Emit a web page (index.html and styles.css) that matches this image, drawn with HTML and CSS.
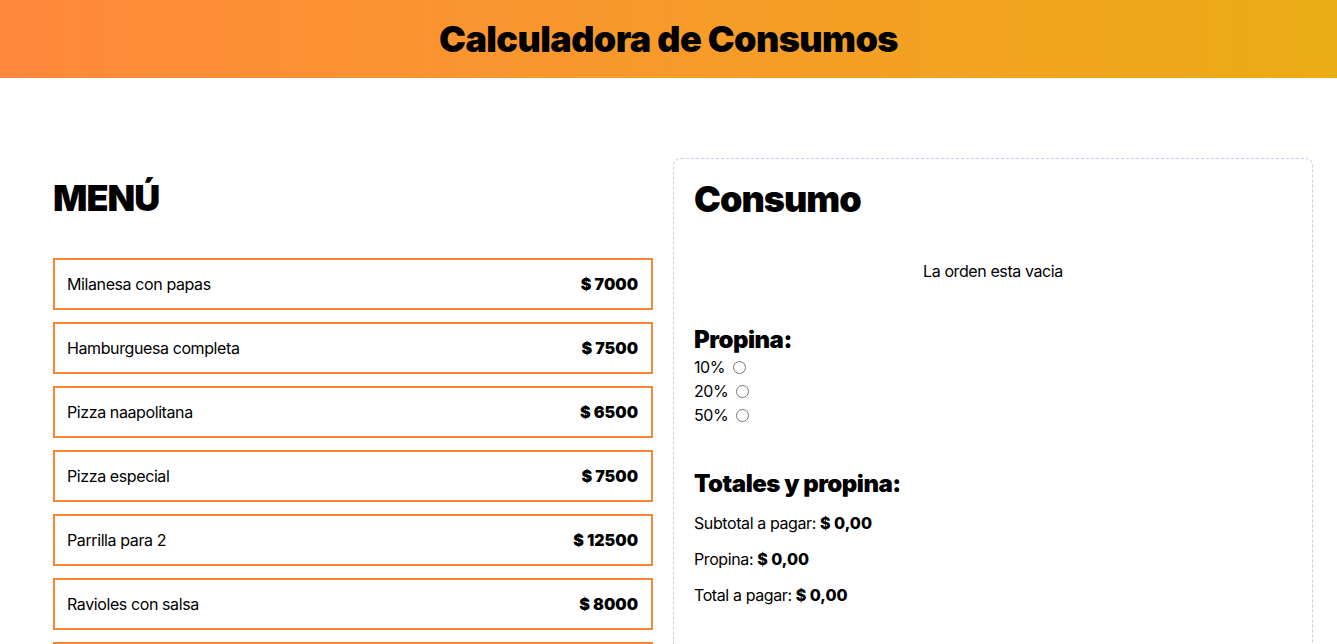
FILE: index.html
```html
<!DOCTYPE html>
<html lang="es">
<head>
<meta charset="utf-8">
<title>Calculadora de Consumos</title>
<link rel="stylesheet" href="styles.css">
</head>
<body>
<header class="header">
  <h1 class="header-title">Calculadora de Consumos</h1>
</header>
<main class="main">
  <section class="menu">
    <h2 class="section-title">MENÚ</h2>
    <div class="menu-list">
      <button class="menu-item"><span>Milanesa con papas</span><span class="price">$ 7000</span></button>
      <button class="menu-item"><span>Hamburguesa completa</span><span class="price">$ 7500</span></button>
      <button class="menu-item"><span>Pizza naapolitana</span><span class="price">$ 6500</span></button>
      <button class="menu-item"><span>Pizza especial</span><span class="price">$ 7500</span></button>
      <button class="menu-item"><span>Parrilla para 2</span><span class="price">$ 12500</span></button>
      <button class="menu-item"><span>Ravioles con salsa</span><span class="price">$ 8000</span></button>
      <button class="menu-item"><span>Tarta de verduras</span><span class="price">$ 5500</span></button>
    </div>
  </section>
  <section class="order">
    <h2 class="section-title">Consumo</h2>
    <p class="empty">La orden esta vacia</p>
    <h3 class="sub-title tip-title">Propina:</h3>
    <form class="tips">
      <label class="tip"><span>10%</span><input type="radio" name="tip"></label>
      <label class="tip"><span>20%</span><input type="radio" name="tip"></label>
      <label class="tip"><span>50%</span><input type="radio" name="tip"></label>
    </form>
    <h3 class="sub-title totals-title">Totales y propina:</h3>
    <p class="total">Subtotal a pagar: <b>$ 0,00</b></p>
    <p class="total">Propina: <b>$ 0,00</b></p>
    <p class="total">Total a pagar: <b>$ 0,00</b></p>
  </section>
</main>
</body>
</html>
```

FILE: styles.css
```css
* { box-sizing: border-box; }
html, body { margin: 0; padding: 0; }
body {
  font-family: Inter, "Noto Sans", sans-serif;
  color: #000;
  background: #fff;
  font-size: 16px;
  letter-spacing: -0.4px;
}
.header {
  height: 78px;
  background: linear-gradient(to right, #ff883c, #f89a2a 50%, #eaac14);
  display: flex;
  align-items: center;
  justify-content: center;
}
.header-title {
  margin: 0;
  font-size: 36px;
  font-weight: 900;
  letter-spacing: -0.6px;
}
.main {
  display: grid;
  grid-template-columns: 640px 640px;
  gap: 0;
  padding: 80px 0 0 33px;
}
.menu { padding: 18px 20px 20px; }
.section-title {
  margin: 0;
  font-size: 36px;
  font-weight: 900;
  line-height: 44px;
  letter-spacing: -1px;
}
.menu .section-title { margin-bottom: 38px; }
.menu-list {
  display: flex;
  flex-direction: column;
  gap: 12px;
}
.menu-item {
  display: flex;
  justify-content: space-between;
  align-items: center;
  width: 100%;
  border: 2px solid #fb8535;
  background: #fff;
  padding: 12px 13px 12px 12px;
  font-family: inherit;
  font-size: 16px;
  line-height: 24px;
  letter-spacing: -0.4px;
  color: #000;
  text-align: left;
}
.price { font-weight: 900; letter-spacing: 0; }
.order {
  border: 1px dashed #c3cfe2;
  border-radius: 8px;
  padding: 18px 20px 20px;
  height: 520px;
}
.empty {
  text-align: center;
  margin: 38px 0 0;
  line-height: 24px;
}
.sub-title {
  margin: 0;
  font-size: 24px;
  font-weight: 900;
  line-height: 30px;
  letter-spacing: -0.5px;
}
.tip-title { margin-top: 42px; }
.tips {
  display: flex;
  flex-direction: column;
}
.tip {
  display: flex;
  align-items: center;
  gap: 8px;
  line-height: 24px;
}
.tip input {
  margin: 0;
  width: 13px;
  height: 13px;
}
.totals-title { margin-top: 42px; }
.total {
  margin: 12px 0 0;
  line-height: 24px;
}
.total b { font-weight: 800; letter-spacing: 0; }
```
